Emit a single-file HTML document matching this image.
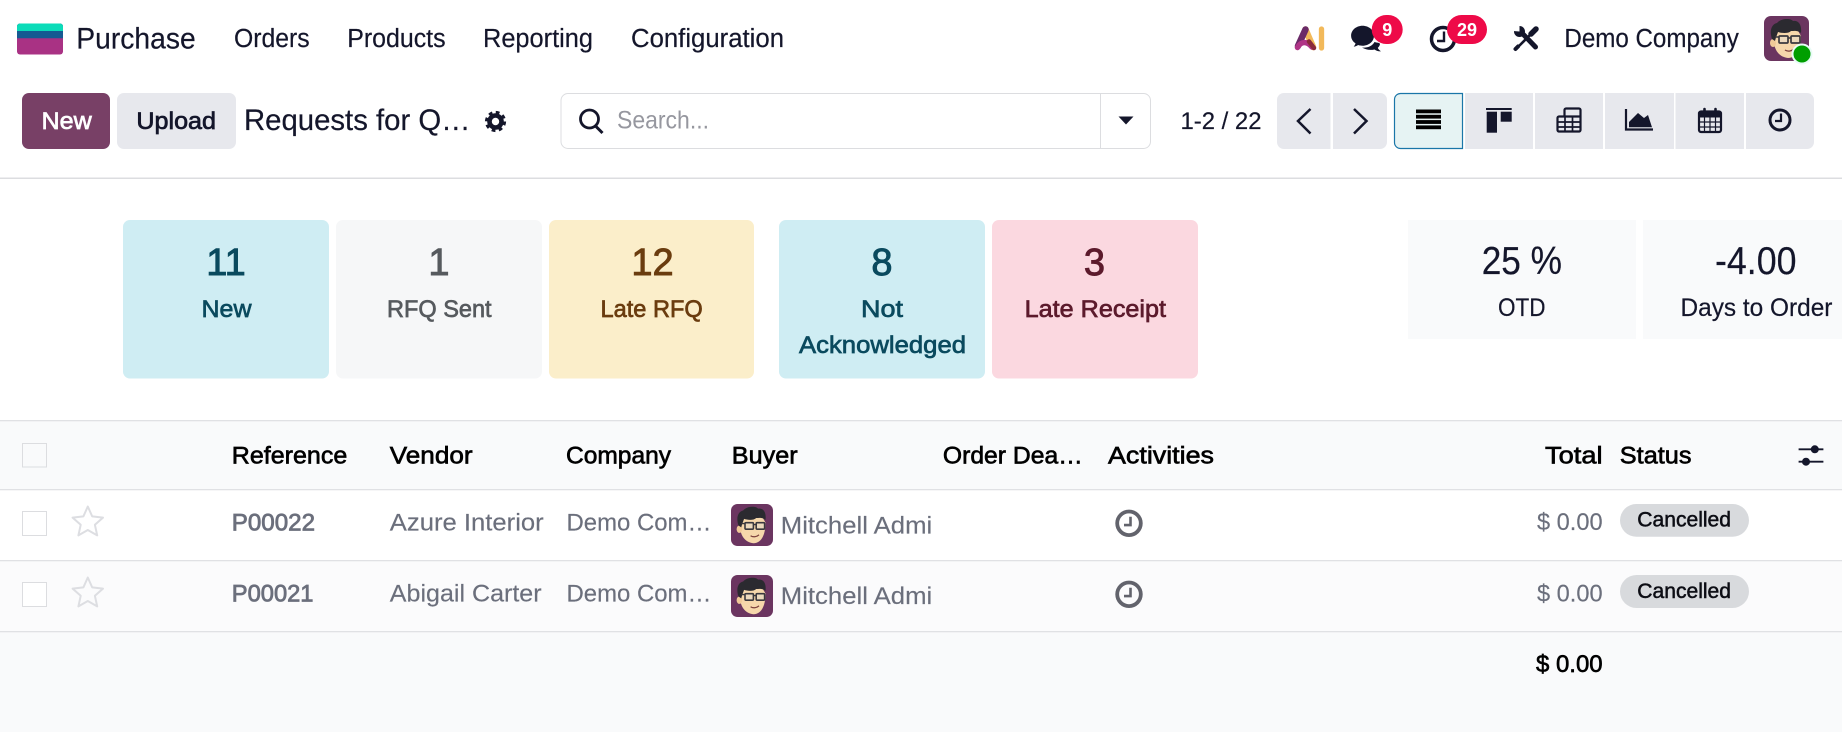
<!DOCTYPE html>
<html lang="en"><head><meta charset="utf-8"><title>Requests for Quotation</title>
<style>
html,body{margin:0;padding:0;background:#fff;width:1842px;height:732px;overflow:hidden}
svg{display:block}
text{font-family:"Liberation Sans",sans-serif;white-space:pre}
</style></head><body>
<svg xmlns="http://www.w3.org/2000/svg" width="1842" height="732" viewBox="0 0 1842 732">
<defs>
<symbol id="av" viewBox="0 0 45 45">
<rect width="45" height="45" rx="7" fill="#6b3560"/>
<path d="M10 22C9 32 14 41 24 42C33 42 37 32 37 20L33 13L14 14Z" fill="#f6d7ab"/>
<ellipse cx="9" cy="27" rx="3" ry="4" fill="#f0c998"/>
<path d="M8 23C5 14 8 8 13 7C17 2 27 2 29 5C34 4 38 8 37 17C33 14 30 15 27 15C24 18 17 17 14 16C13 19 12 21 11 25Z" fill="#2b2a30"/>
<rect x="15" y="20" width="9" height="7" rx="1" fill="#ecd9bd" stroke="#3a383e" stroke-width="1.700"/>
<rect x="27" y="20" width="9" height="7" rx="1" fill="#ecd9bd" stroke="#3a383e" stroke-width="1.700"/>
<path d="M24 22H27M11 21H15" stroke="#3a383e" stroke-width="1.500"/>
<path d="M21 34C24 36 28 35 30 33" stroke="#7a3d3a" stroke-width="1.300" fill="none"/>
</symbol>
<g id="star"><path d="M0-16L4.400-6.100L15.200-4.900L7.100 2.300L9.400 12.900L0 7.500L-9.400 12.900L-7.100 2.300L-15.200-4.900L-4.400-6.100Z" fill="none" stroke="#dddee2" stroke-width="2" stroke-linejoin="round"/></g>
<g id="clk"><circle r="11.800" fill="none" stroke="#62636c" stroke-width="3.800"/><path d="M1.500-6.500V1.800H-5" fill="none" stroke="#62636c" stroke-width="2.600"/></g>
</defs>

<!-- navbar -->
<rect x="17" y="23.500" width="46" height="31" rx="3" fill="#a93284"/>
<path d="M17 38.300V26.500a3 3 0 0 1 3-3H60a3 3 0 0 1 3 3V38.300Z" fill="#155a92"/>
<path d="M17 31V26.500a3 3 0 0 1 3-3H60a3 3 0 0 1 3 3V31Z" fill="#0bdcb9"/>
<g fill="#14162b" stroke="#14162b" stroke-width=".2">
<text x="76.300" y="48.500" font-size="30" textLength="119.400" lengthAdjust="spacingAndGlyphs">Purchase</text>
<text x="234" y="47" font-size="25.500" textLength="75.600" lengthAdjust="spacingAndGlyphs">Orders</text>
<text x="347.200" y="47" font-size="25.500" textLength="98.400" lengthAdjust="spacingAndGlyphs">Products</text>
<text x="483" y="47" font-size="25.500" textLength="110" lengthAdjust="spacingAndGlyphs">Reporting</text>
<text x="631" y="47" font-size="25.500" textLength="153" lengthAdjust="spacingAndGlyphs">Configuration</text>
<text x="1564.400" y="47" font-size="25.500" textLength="174.400" lengthAdjust="spacingAndGlyphs">Demo Company</text>
</g>
<!-- AI logo -->
<path d="M1321.500 29V48" stroke="#f2b95a" stroke-width="5.300" stroke-linecap="round"/>
<path d="M1305.500 29.500L1313 47" stroke="#f2b95a" stroke-width="6.500" stroke-linecap="round"/>
<path d="M1305.500 29.500L1298 46" stroke="#6a2a68" stroke-width="6.500" stroke-linecap="round"/>
<path d="M1297.500 47.500C1301 41 1307 41 1312 47" stroke="#b03587" stroke-width="5.500" fill="none" stroke-linecap="round"/>
<path d="M1309 41.500L1314 48" stroke="#8a2a3a" stroke-width="4.500" stroke-linecap="round"/>
<!-- chat -->
<path d="M1362.500 25.700c6.500 0 11.500 4.400 11.500 10s-5 10-11.500 10c-1.600 0-3-.2-4.400-.7c-1.200 1-2.900 1.600-4.400 1.600c1-1 1.600-2 1.800-3.300c-2.700-1.800-4.400-4.500-4.400-7.600c0-5.600 5-10 11.400-10Z" fill="#14162b"/>
<path d="M1362 47.500c5 .6 10-1 12.500-5.500c2.500 .8 5 .5 5.500 2c-.3 1.800-1.200 3-2.200 3.800c.4 1.300 1.500 2.500 3.200 3.500c-2.500 .2-4.800-.6-6.500-1.800c-4.500 1-9 .2-12.500-2Z" fill="#14162b"/>
<rect x="1371.700" y="15" width="31" height="29" rx="14.500" fill="#ee0a48"/>
<text x="1387.200" y="36" font-size="18" font-weight="bold" fill="#fff" text-anchor="middle">9</text>
<!-- clock -->
<circle cx="1443" cy="39" r="11.500" fill="none" stroke="#14162b" stroke-width="3.500"/>
<path d="M1444 31.500V41H1437" fill="none" stroke="#14162b" stroke-width="2.400"/>
<rect x="1447" y="15" width="40" height="29" rx="14.500" fill="#ee0a48"/>
<text x="1467" y="36" font-size="18" font-weight="bold" fill="#fff" text-anchor="middle">29</text>
<!-- tools -->
<g fill="none" stroke="#14162b" stroke-linecap="round">
<path d="M1522 33L1535.500 47" stroke-width="5"/>
<path d="M1536 29L1531 34" stroke-width="5.500"/>
<path d="M1531 34L1519 46" stroke-width="2.600"/>
<path d="M1518 46.500L1515.500 49" stroke-width="4"/>
</g>
<circle cx="1519.500" cy="31.500" r="5.500" fill="#14162b"/>
<path d="M1519.500 31.500L1513 31L1513 25L1519.500 25Z" fill="#fff"/>
<!-- avatar -->
<use href="#av" x="1764" y="16" width="45" height="45"/>
<circle cx="1802" cy="54" r="9.500" fill="#009e00" stroke="#e8fbf6" stroke-width="2"/>

<!-- control panel -->
<rect x="22" y="93" width="88" height="56" rx="7" fill="#784066"/>
<text x="41.500" y="129" font-size="24" fill="#fff" stroke="#fff" stroke-width=".7" textLength="50.200" lengthAdjust="spacingAndGlyphs">New</text>
<rect x="117" y="93" width="119" height="56" rx="7" fill="#e7e8ed"/>
<text x="136.400" y="129" font-size="24" fill="#14162b" stroke="#14162b" stroke-width=".7" textLength="79.600" lengthAdjust="spacingAndGlyphs">Upload</text>
<text x="244" y="130" font-size="29.500" fill="#14162b" stroke="#14162b" stroke-width=".2" textLength="226.500" lengthAdjust="spacingAndGlyphs">Requests for Q…</text>
<!-- gear -->
<g transform="translate(495.500 121.500)"><circle r="8.800" fill="none" stroke="#14162b" stroke-width="3.600" stroke-dasharray="3.600 3.310"/><circle r="6" fill="none" stroke="#14162b" stroke-width="4.600"/></g>

<!-- search -->
<rect x="561" y="93.500" width="589.500" height="55" rx="7" fill="#fff" stroke="#dcdde0" stroke-width="1"/>
<path d="M1100.500 94V148.500" stroke="#dcdde0" stroke-width="1"/>
<circle cx="589.500" cy="119" r="9" fill="none" stroke="#14162b" stroke-width="2.800"/>
<path d="M595.500 126L602.500 133" stroke="#14162b" stroke-width="3"/>
<text x="617" y="128.500" font-size="25" fill="#96979f" textLength="92" lengthAdjust="spacingAndGlyphs">Search...</text>
<path d="M1118.500 116.500H1133.500L1126 124.500Z" fill="#14162b"/>
<text x="1180.500" y="129" font-size="24.500" fill="#14162b" stroke="#14162b" stroke-width=".2" textLength="81" lengthAdjust="spacingAndGlyphs">1-2 / 22</text>

<!-- pager -->
<path d="M1277 100a7 7 0 0 1 7-7H1330.500V149H1284a7 7 0 0 1-7-7Z" fill="#e7e8ed"/>
<path d="M1333 93H1380a7 7 0 0 1 7 7V142a7 7 0 0 1-7 7H1333Z" fill="#e7e8ed"/>
<path d="M1310.500 109L1298 121L1310.500 133.500" fill="none" stroke="#14162b" stroke-width="2.500"/>
<path d="M1354 109L1366.500 121L1354 133.500" fill="none" stroke="#14162b" stroke-width="2.500"/>

<!-- view switcher -->
<path d="M1394.500 99.500a6 6 0 0 1 6-6H1462.500V148.500H1400.500a6 6 0 0 1-6-6Z" fill="#e6f3f3" stroke="#1a76a8" stroke-width="1.200"/>
<rect x="1465" y="93" width="68" height="56" fill="#e7e8ed"/>
<rect x="1535" y="93" width="68" height="56" fill="#e7e8ed"/>
<rect x="1605" y="93" width="69" height="56" fill="#e7e8ed"/>
<rect x="1675.500" y="93" width="68.500" height="56" fill="#e7e8ed"/>
<path d="M1746 93H1807a7 7 0 0 1 7 7V142a7 7 0 0 1-7 7H1746Z" fill="#e7e8ed"/>
<!-- list icon -->
<g fill="#000"><rect x="1416" y="109.500" width="25" height="3.800"/><rect x="1416" y="114.800" width="25" height="3.800"/><rect x="1416" y="120.100" width="25" height="3.800"/><rect x="1416" y="125.400" width="25" height="3.800"/></g>
<!-- kanban icon -->
<g fill="#14162b"><rect x="1486" y="108" width="25.700" height="2"/><rect x="1486.700" y="111.700" width="10.300" height="21"/><rect x="1500.700" y="111.700" width="11" height="10"/></g>
<!-- pivot icon -->
<g fill="none" stroke="#14162b"><path d="M1564.500 116.500V110a1.500 1.500 0 0 1 1.500-1.500H1579a1.500 1.500 0 0 1 1.500 1.500V130a1.500 1.500 0 0 1-1.500 1.500H1559a1.500 1.500 0 0 1-1.500-1.500V118a1.500 1.500 0 0 1 1.500-1.500H1580" stroke-width="2.200"/><path d="M1558 122H1580M1558 127H1580M1565 117V131M1572.500 117V131" stroke-width="1.700"/></g>
<!-- graph icon -->
<path d="M1626 109V129.500H1653" fill="none" stroke="#14162b" stroke-width="2.200"/>
<path d="M1629 127.300V122L1638 113L1644 118L1648 115L1652 127.300Z" fill="#14162b"/>
<!-- calendar icon -->
<rect x="1699" y="111.500" width="22" height="20.500" rx="2" fill="none" stroke="#14162b" stroke-width="2.200"/>
<rect x="1699" y="111.500" width="22" height="6" fill="#14162b"/>
<path d="M1704.500 109V114M1715.500 109V114" stroke="#14162b" stroke-width="2.600" stroke-linecap="round"/>
<path d="M1699 122H1721M1699 127H1721M1704.500 117V132M1710 117V132M1715.500 117V132" stroke="#14162b" stroke-width="1.200"/>
<!-- clock view -->
<circle cx="1780" cy="120" r="10" fill="none" stroke="#14162b" stroke-width="3"/>
<path d="M1781 113.500V121H1775" fill="none" stroke="#14162b" stroke-width="2.200"/>
<rect x="0" y="177.500" width="1842" height="1.500" fill="#dcdde0"/>

<!-- cards -->
<rect x="123" y="220" width="206" height="158.500" rx="7" fill="#cfedf3"/>
<rect x="336" y="220" width="206" height="158.500" rx="7" fill="#f6f7f8"/>
<rect x="549" y="220" width="205" height="158.500" rx="7" fill="#fbeeca"/>
<rect x="779" y="220" width="206" height="158.500" rx="7" fill="#cfedf3"/>
<rect x="992" y="220" width="206" height="158.500" rx="7" fill="#fbd8e0"/>
<g text-anchor="middle" font-size="38" stroke-width=".9">
<text x="226" y="275" fill="#0a4a5e" stroke="#0a4a5e">11</text>
<text x="439" y="275" fill="#565a5e" stroke="#565a5e">1</text>
<text x="652.500" y="275" fill="#6a3c0f" stroke="#6a3c0f">12</text>
<text x="882" y="275" fill="#0a4a5e" stroke="#0a4a5e">8</text>
<text x="1094.400" y="275" fill="#5c1a2c" stroke="#5c1a2c">3</text>
</g>
<g font-size="24.500" stroke-width=".7">
<text x="201.500" y="317" fill="#0a4a5e" stroke="#0a4a5e" textLength="50" lengthAdjust="spacingAndGlyphs">New</text>
<text x="387" y="317" fill="#565a5e" stroke="#565a5e" textLength="104.600" lengthAdjust="spacingAndGlyphs">RFQ Sent</text>
<text x="600.500" y="317" fill="#6a3c0f" stroke="#6a3c0f" textLength="102.300" lengthAdjust="spacingAndGlyphs">Late RFQ</text>
<text x="861" y="317" fill="#0a4a5e" stroke="#0a4a5e" textLength="42" lengthAdjust="spacingAndGlyphs">Not</text>
<text x="799" y="353" fill="#0a4a5e" stroke="#0a4a5e" textLength="167" lengthAdjust="spacingAndGlyphs">Acknowledged</text>
<text x="1024.700" y="317" fill="#5c1a2c" stroke="#5c1a2c" textLength="141.300" lengthAdjust="spacingAndGlyphs">Late Receipt</text>
</g>
<rect x="1408" y="220" width="228" height="119" fill="#f9fafb"/>
<rect x="1643" y="220" width="199" height="119" fill="#f9fafb"/>
<g fill="#14162b" stroke="#14162b" stroke-width=".2">
<text x="1481.700" y="274" font-size="38.500" textLength="80.300" lengthAdjust="spacingAndGlyphs">25 %</text>
<text x="1715" y="274" font-size="38.500" textLength="81.500" lengthAdjust="spacingAndGlyphs">-4.00</text>
<text x="1498" y="316" font-size="25" textLength="47.600" lengthAdjust="spacingAndGlyphs">OTD</text>
<text x="1680.500" y="316" font-size="25" textLength="151.900" lengthAdjust="spacingAndGlyphs">Days to Order</text>
</g>

<!-- table -->
<rect x="0" y="420" width="1842" height="312" fill="#f9fafb"/>
<rect x="0" y="490" width="1842" height="70" fill="#fff"/>
<rect x="0" y="561" width="1842" height="70" fill="#fbfbfc"/>
<g fill="#e0e1e4"><rect y="420" width="1842" height="1.300"/><rect y="489" width="1842" height="1.300"/><rect y="560" width="1842" height="1.300"/><rect y="631" width="1842" height="1.300"/></g>
<g fill="#fff" stroke="#dcdde0" stroke-width="1"><rect x="22.500" y="443.500" width="24" height="23.500" fill="none"/><rect x="22.500" y="511.500" width="24" height="24"/><rect x="22.500" y="582.500" width="24" height="24"/></g>
<use href="#star" x="87.800" y="522.500"/><use href="#star" x="87.800" y="593.500"/>

<g font-size="24.500" fill="#000" stroke="#000" stroke-width=".65">
<text x="231.800" y="463.300" textLength="115.500" lengthAdjust="spacingAndGlyphs">Reference</text>
<text x="389.800" y="463.300" textLength="82.800" lengthAdjust="spacingAndGlyphs">Vendor</text>
<text x="566" y="463.300" textLength="105" lengthAdjust="spacingAndGlyphs">Company</text>
<text x="731.800" y="463.300" textLength="65.800" lengthAdjust="spacingAndGlyphs">Buyer</text>
<text x="942.900" y="463.300" textLength="140" lengthAdjust="spacingAndGlyphs">Order Dea…</text>
<text x="1108" y="463.300" textLength="106" lengthAdjust="spacingAndGlyphs">Activities</text>
<text x="1545" y="463.300" textLength="57.600" lengthAdjust="spacingAndGlyphs">Total</text>
<text x="1619.800" y="463.300" textLength="71.700" lengthAdjust="spacingAndGlyphs">Status</text>
<text x="1536" y="672" textLength="66.600" lengthAdjust="spacingAndGlyphs">$ 0.00</text>
</g>
<!-- adjust icon -->
<path d="M1798.600 449.300H1823.400M1798.600 461.700H1823.400" stroke="#14162b" stroke-width="1.800"/>
<circle cx="1814.800" cy="449.300" r="4" fill="#14162b"/><circle cx="1806" cy="461.700" r="4" fill="#14162b"/>

<g font-size="24.500" fill="#6b6f7c" stroke="#6b6f7c" stroke-width=".15">
<text x="231.800" y="530.700" stroke-width=".8" textLength="83.200" lengthAdjust="spacingAndGlyphs">P00022</text>
<text x="231.800" y="601.700" stroke-width=".8" textLength="81.700" lengthAdjust="spacingAndGlyphs">P00021</text>
<text x="389.800" y="530.700" textLength="153.900" lengthAdjust="spacingAndGlyphs">Azure Interior</text>
<text x="389.800" y="601.700" textLength="151.800" lengthAdjust="spacingAndGlyphs">Abigail Carter</text>
<text x="566.500" y="530.700" textLength="144.900" lengthAdjust="spacingAndGlyphs">Demo Com…</text>
<text x="566.500" y="601.700" textLength="144.900" lengthAdjust="spacingAndGlyphs">Demo Com…</text>
<text x="780.800" y="533.500" textLength="151.400" lengthAdjust="spacingAndGlyphs">Mitchell Admi</text>
<text x="780.800" y="604" textLength="151.400" lengthAdjust="spacingAndGlyphs">Mitchell Admi</text>
<text x="1537" y="530" textLength="65.600" lengthAdjust="spacingAndGlyphs">$ 0.00</text>
<text x="1537" y="601.700" textLength="65.600" lengthAdjust="spacingAndGlyphs">$ 0.00</text>
</g>
<use href="#av" x="731" y="504" width="42" height="42"/>
<use href="#av" x="731" y="575" width="42" height="42"/>
<use href="#clk" x="1129" y="523.300"/>
<use href="#clk" x="1129" y="594.300"/>
<rect x="1620" y="504" width="129" height="32.800" rx="16.400" fill="#d8dadd"/>
<rect x="1620" y="575" width="129" height="33" rx="16.500" fill="#d8dadd"/>
<g font-size="21" fill="#0c0d14" stroke="#0c0d14" stroke-width=".5">
<text x="1637.300" y="526.700" textLength="93.700" lengthAdjust="spacingAndGlyphs">Cancelled</text>
<text x="1637.300" y="598" textLength="93.700" lengthAdjust="spacingAndGlyphs">Cancelled</text>
</g>
</svg>
</body></html>
